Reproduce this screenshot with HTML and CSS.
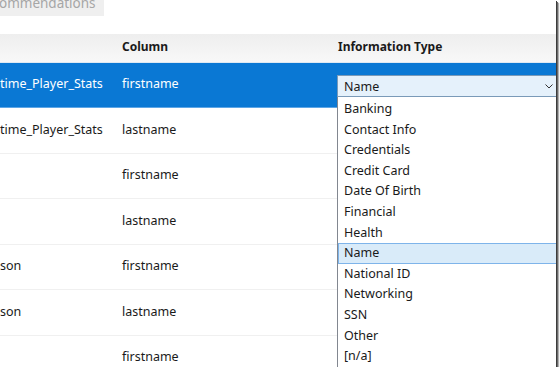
FILE: index.html
```html
<!DOCTYPE html>
<html>
<head>
<meta charset="utf-8">
<link rel="stylesheet" href="styles.css">
</head>
<body>
<div class="frame">
  <div class="toolbar">
    <div class="tab">ommendations</div>
  </div>
  <div class="grid">
    <div class="row head">
      <div class="cell"></div>
      <div class="cell">Column</div>
      <div class="cell">Information Type</div>
    </div>
    <div class="row selected">
      <div class="cell">time_Player_Stats</div>
      <div class="cell">firstname</div>
      <div class="cell combo-cell">
        <div class="combo">
          <span>Name</span>
          <svg class="chev" width="8" height="5" viewBox="0 0 8 5"><path d="M0.5 0.5 L4 4 L7.5 0.5" fill="none" stroke="#333" stroke-width="1"/></svg>
        </div>
        <ul class="list">
          <li>Banking</li>
          <li>Contact Info</li>
          <li>Credentials</li>
          <li>Credit Card</li>
          <li>Date Of Birth</li>
          <li>Financial</li>
          <li>Health</li>
          <li class="hl">Name</li>
          <li>National ID</li>
          <li>Networking</li>
          <li>SSN</li>
          <li>Other</li>
          <li>[n/a]</li>
        </ul>
      </div>
    </div>
    <div class="row">
      <div class="cell">time_Player_Stats</div>
      <div class="cell">lastname</div>
      <div class="cell"></div>
    </div>
    <div class="row">
      <div class="cell"></div>
      <div class="cell">firstname</div>
      <div class="cell"></div>
    </div>
    <div class="row">
      <div class="cell"></div>
      <div class="cell">lastname</div>
      <div class="cell"></div>
    </div>
    <div class="row">
      <div class="cell">son</div>
      <div class="cell">firstname</div>
      <div class="cell"></div>
    </div>
    <div class="row">
      <div class="cell">son</div>
      <div class="cell">lastname</div>
      <div class="cell"></div>
    </div>
    <div class="row">
      <div class="cell">&nbsp;</div>
      <div class="cell">firstname</div>
      <div class="cell"></div>
    </div>
  </div>
</div>
</body>
</html>
```

FILE: styles.css
```css
* { box-sizing: border-box; }
html, body {
  margin: 0;
  padding: 0;
  background: #ffffff;
}
body {
  font-family: "Noto Sans", "Open Sans", sans-serif;
  font-size: 12.5px;
  color: #1a1a1a;
}
.frame {
  width: 556px;
  height: 367px;
  overflow: hidden;
  background: #ffffff;
  box-shadow: 1px 1px 0 #3c3c3c, 2px 2px 0 #6a6a6a, 3px 3px 1px #b0b0b0;
  position: relative;
}
.toolbar {
  height: 34px;
}
.tab {
  width: 104px;
  height: 16px;
  background: #efefef;
  color: #a6a6a6;
  font-size: 13.5px;
  line-height: 7px;
  text-indent: -1px;
  overflow: hidden;
  white-space: nowrap;
}
.grid {
  display: flex;
  flex-direction: column;
}
.row {
  display: grid;
  grid-template-columns: 121px 216px 1fr;
  height: 45.5px;
  align-items: center;
  border-bottom: 1px solid #f0f0f0;
  padding-bottom: 2px;
}
.row .cell {
  white-space: nowrap;
}
.row.head {
  height: 29px;
  background: linear-gradient(#eeeeee, #f8f8f8);
  border-bottom: 1px solid #dfe9f3;
  font-weight: bold;
  font-size: 12px;
  padding-bottom: 4px;
}
.row.head .cell:nth-child(3) { padding-left: 1px; }
.row.selected {
  height: 45px;
  background: #0a78d4;
  color: #ffffff;
  border-bottom: 1px solid #5ea6e6;
  padding-bottom: 4px;
}
.row .cell:nth-child(2) { padding-left: 1px; }
.combo-cell {
  position: relative;
  align-self: stretch;
}
.combo {
  position: absolute;
  left: 0;
  top: 12px;
  width: 222px;
  height: 22px;
  background: #e5f1fb;
  border: 1px solid #7a9ab8;
  color: #1a1a1a;
  padding-left: 6px;
  line-height: 19px;
  display: flex;
  align-items: center;
}
.combo span { flex: 1; }
.chev {
  margin-right: 5px;
  margin-top: 1px;
}
.list {
  position: absolute;
  left: 0;
  top: 34px;
  width: 222px;
  margin: 0;
  padding: 2px 0 0;
  list-style: none;
  background: #ffffff;
  border: 1px solid #828790;
  border-top: none;
  color: #1a1a1a;
  z-index: 2;
}
.list li {
  height: 20.6px;
  line-height: 20.6px;
  padding-left: 6px;
}
.list li.hl {
  background: #d9ebf9;
  border: 1px solid #7eb4ea;
  padding-left: 5px;
  line-height: 18.6px;
}
```
